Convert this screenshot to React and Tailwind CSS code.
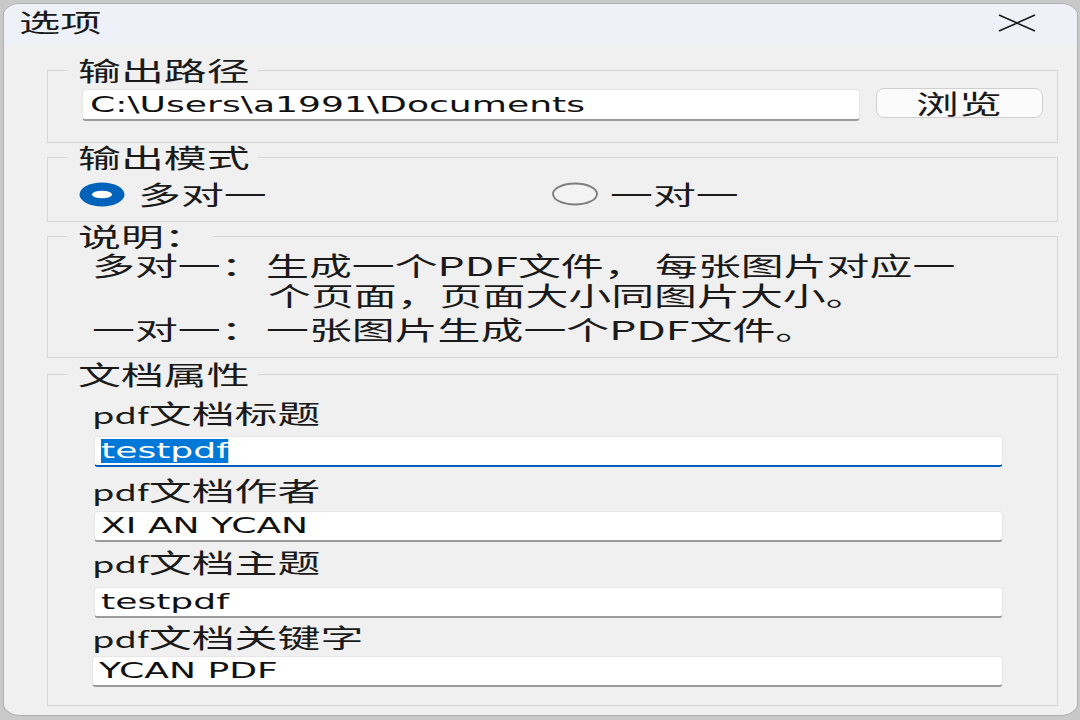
import React from "react";

const cjk = "font-['Noto_Sans_CJK_SC',sans-serif]";
const latin = "font-['DejaVu_Sans','Noto_Sans_CJK_SC',sans-serif]";

// the dialog is photographed stretched sideways, so text gets widened too
const Wide = ({ children, className = "" }) => (
  <span
    className={`inline-block origin-left scale-x-[1.65] whitespace-nowrap ${className}`}
  >
    {children}
  </span>
);

const Group = ({ title, width, className = "", children }) => (
  <fieldset className={`border border-[#d6d6d6] ${className}`}>
    <legend
      className={`ml-[19px] h-[26px] pl-[11px] text-[26px] leading-[26px] ${width}`}
    >
      <Wide>{title}</Wide>
    </legend>
    {children}
  </fieldset>
);

const Field = ({ value, focused, className = "" }) => (
  <div
    className={`flex h-[31px] items-center rounded-[4px] border border-[#e6e6e6] bg-white pl-[6px] ${
      focused ? "border-b-2 border-b-[#005fb8]" : "border-b-2 border-b-[#9a9a9a]"
    } ${className}`}
  >
    <span
      className={`inline-block origin-left scale-x-[1.72] whitespace-nowrap text-[21px] leading-[24px] text-[#111] ${latin}`}
    >
      {focused ? (
        <span className="bg-[#0078d7] text-white">{value}</span>
      ) : (
        value
      )}
    </span>
  </div>
);

const Radio = ({ checked }) =>
  checked ? (
    <svg width="46" height="25" viewBox="0 0 46 25">
      <ellipse cx="23" cy="12.5" rx="22.5" ry="12" fill="#0062b8" />
      <ellipse cx="23" cy="12.5" rx="10" ry="3.8" fill="#ffffff" />
    </svg>
  ) : (
    <svg width="46" height="25" viewBox="0 0 46 25">
      <ellipse
        cx="23"
        cy="12"
        rx="22"
        ry="10.5"
        fill="#f3f3f3"
        stroke="#7e7e7e"
        strokeWidth="1.8"
      />
    </svg>
  );

const Label = ({ latinPart, rest, className = "" }) => (
  <div className={`h-[30px] text-[26px] leading-[30px] ${className}`}>
    <Wide>
      <span className="text-[22px]">{latinPart}</span>
      {rest}
    </Wide>
  </div>
);

export default function App() {
  return (
    <div className={`h-[720px] w-[1080px] overflow-hidden bg-[#c9c9c9] pl-[3px] pt-[3px] text-[#1a1a1a] ${cjk}`}>
      <div className="flex h-[713px] w-[1075px] flex-col overflow-hidden rounded-[18px_/_12px] border border-[#b0b0b0] bg-[#f0f0f0]">
        {/* title bar */}
        <div className="flex h-[41px] shrink-0 items-center bg-[#eef2f8] pl-[15px] pr-[41px]">
          <span className="mb-[8px] text-[25px] leading-[30px]">
            <Wide>选项</Wide>
          </span>
          <svg className="mb-[4px] ml-auto" width="38" height="18" viewBox="0 0 38 18">
            <path
              d="M1 1 L37 17 M37 1 L1 17"
              stroke="#1c1c1c"
              strokeWidth="1.7"
              fill="none"
            />
          </svg>
        </div>

        <div className="flex flex-col pb-[8px] pl-[43px] pr-[19px] pt-[12px]">
          {/* output path */}
          <Group title="输出路径" width="w-[191px]">
            <div className="flex items-start pb-[21px] pl-[34px] pr-[13px] pt-[6px]">
              <div className="flex h-[32px] w-[778px] items-center rounded-[4px] border border-[#e6e6e6] border-b-2 border-b-[#9a9a9a] bg-white pl-[7px]">
                <span className={`inline-block origin-left scale-x-[1.72] whitespace-nowrap text-[21px] leading-[24px] text-[#111] ${latin}`}>
                  {"C:\\Users\\a1991\\Documents"}
                </span>
              </div>
              <button className="ml-[16px] mt-[-1px] flex h-[30px] w-[167px] items-center justify-center rounded-[8px] border border-[#d0d0d0] bg-[#fbfbfb] text-[26px] leading-[30px]">
                <span className="inline-block scale-x-[1.65]">浏览</span>
              </button>
            </div>
          </Group>

          {/* output mode */}
          <Group title="输出模式" width="w-[191px]" className="mt-[1px]">
            <div className="flex h-[51px] items-center pb-[3px] pl-[31px]">
              <div className="flex w-[473px] items-center gap-[13px]">
                <Radio checked />
                <span className="text-[26px] leading-[30px]">
                  <Wide>多对一</Wide>
                </span>
              </div>
              <div className="flex items-center gap-[12px]">
                <Radio />
                <span className="text-[26px] leading-[30px]">
                  <Wide>一对一</Wide>
                </span>
              </div>
            </div>
          </Group>

          {/* notes */}
          <Group title="说明：" width="w-[146px]" className="mt-[1px]">
            <div className="flex flex-col pb-[13px] pl-[44px] pt-[1px] text-[26px] leading-[30px]">
              <div className="flex">
                <div className="w-[174px]">
                  <Wide>多对一：</Wide>
                </div>
                <div className="w-[389px]">
                  <Wide className="scale-x-[1.5]">生成一个PDF文件，</Wide>
                </div>
                <Wide>每张图片对应一</Wide>
              </div>
              <div className="flex">
                <div className="w-[176px]" />
                <Wide>个页面，页面大小同图片大小。</Wide>
              </div>
              <div className="mt-[4px] flex">
                <div className="w-[174px]">
                  <Wide>一对一：</Wide>
                </div>
                <Wide>一张图片生成一个PDF文件。</Wide>
              </div>
            </div>
          </Group>

          {/* document properties */}
          <Group title="文档属性" width="w-[191px]" className="mt-[3px]">
            <div className="flex flex-col pb-[18px] pl-[44px] pr-[54px] pt-[11px]">
              <Label latinPart="pdf" rest="文档标题" />
              <Field value="testpdf" focused className="ml-[2px] mt-[8px]" />
              <Label latinPart="pdf" rest="文档作者" className="mt-[8px]" />
              <Field value="XI AN YCAN" className="ml-[2px] mt-[6px]" />
              <Label latinPart="pdf" rest="文档主题" className="mt-[5px]" />
              <Field value="testpdf" className="ml-[2px] mt-[10px]" />
              <Label latinPart="pdf" rest="文档关键字" className="mt-[4px]" />
              <Field value="YCAN PDF" className="mt-[4px]" />
            </div>
          </Group>
        </div>
      </div>
    </div>
  );
}
